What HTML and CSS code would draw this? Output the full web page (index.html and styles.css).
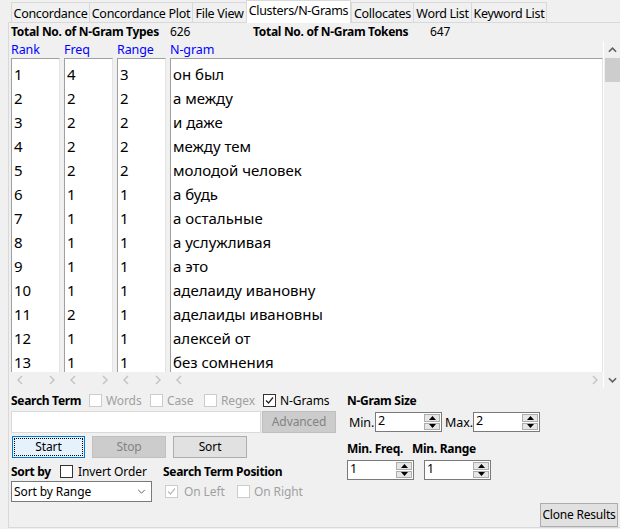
FILE: index.html
```html
<!DOCTYPE html>
<html>
<head>
<meta charset="utf-8">
<link rel="stylesheet" href="styles.css">
</head>
<body>
<div class="tabs">
  <div class="tab w1">Concordance</div>
  <div class="tab w2">Concordance Plot</div>
  <div class="tab w3">File View</div>
  <div class="tab active w4">Clusters/N-Grams</div>
  <div class="tab w5">Collocates</div>
  <div class="tab w6">Word List</div>
  <div class="tab w7">Keyword List</div>
</div>
<div class="panel">
  <div class="stats">
    <span class="b lbl-types">Total No. of N-Gram Types</span><span class="val1">626</span>
    <span class="b lbl-tokens">Total No. of N-Gram Tokens</span><span class="val2">647</span>
  </div>
  <div class="table">
    <div class="col c-small">
      <div class="head">Rank</div>
      <div class="box">
        <div class="row">1</div><div class="row">2</div><div class="row">3</div><div class="row">4</div><div class="row">5</div><div class="row">6</div><div class="row">7</div><div class="row">8</div><div class="row">9</div><div class="row">10</div><div class="row">11</div><div class="row">12</div><div class="row">13</div>
      </div>
      <div class="hscroll"><svg class="chev" viewBox="0 0 6 10"><path d="M5 1 L1 5 L5 9"/></svg><svg class="chev" viewBox="0 0 6 10"><path d="M1 1 L5 5 L1 9"/></svg></div>
    </div>
    <div class="col c-small">
      <div class="head">Freq</div>
      <div class="box">
        <div class="row">4</div><div class="row">2</div><div class="row">2</div><div class="row">2</div><div class="row">2</div><div class="row">1</div><div class="row">1</div><div class="row">1</div><div class="row">1</div><div class="row">1</div><div class="row">2</div><div class="row">1</div><div class="row">1</div>
      </div>
      <div class="hscroll"><svg class="chev" viewBox="0 0 6 10"><path d="M5 1 L1 5 L5 9"/></svg><svg class="chev" viewBox="0 0 6 10"><path d="M1 1 L5 5 L1 9"/></svg></div>
    </div>
    <div class="col c-small">
      <div class="head">Range</div>
      <div class="box">
        <div class="row">3</div><div class="row">2</div><div class="row">2</div><div class="row">2</div><div class="row">2</div><div class="row">1</div><div class="row">1</div><div class="row">1</div><div class="row">1</div><div class="row">1</div><div class="row">1</div><div class="row">1</div><div class="row">1</div>
      </div>
      <div class="hscroll"><svg class="chev" viewBox="0 0 6 10"><path d="M5 1 L1 5 L5 9"/></svg><svg class="chev" viewBox="0 0 6 10"><path d="M1 1 L5 5 L1 9"/></svg></div>
    </div>
    <div class="col c-wide">
      <div class="head">N-gram</div>
      <div class="box">
        <div class="row">он был</div><div class="row">а между</div><div class="row">и даже</div><div class="row">между тем</div><div class="row">молодой человек</div><div class="row">а будь</div><div class="row">а остальные</div><div class="row">а услужливая</div><div class="row">а это</div><div class="row">аделаиду ивановну</div><div class="row">аделаиды ивановны</div><div class="row">алексей от</div><div class="row">без сомнения</div>
      </div>
      <div class="hscroll"><svg class="chev" viewBox="0 0 6 10"><path d="M5 1 L1 5 L5 9"/></svg><svg class="chev" viewBox="0 0 6 10"><path d="M1 1 L5 5 L1 9"/></svg></div>
    </div>
    <div class="vscroll">
      <div class="varrow"><svg class="vchev" viewBox="0 0 10 6"><path d="M1 5 L5 1 L9 5"/></svg></div>
      <div class="thumb"></div>
      <div class="spacer"></div>
      <div class="varrow"><svg class="vchev" viewBox="0 0 10 6"><path d="M1 1 L5 5 L9 1"/></svg></div>
    </div>
  </div>
  <div class="bottom">
    <div class="left">
      <div class="r1">
        <span class="b st">Search Term</span>
        <span class="cb dis"></span><span class="cbl dis-t l-words">Words</span>
        <span class="cb dis"></span><span class="cbl dis-t l-case">Case</span>
        <span class="cb dis"></span><span class="cbl dis-t l-regex">Regex</span>
        <span class="cb"><svg viewBox="0 0 11 11"><path d="M2 5.5 L4.5 8 L9 2.5"/></svg></span><span class="cbl">N-Grams</span>
      </div>
      <div class="r2">
        <div class="input"></div>
        <div class="btn disabled adv">Advanced</div>
      </div>
      <div class="r3">
        <div class="btn start"><span class="focus">Start</span></div>
        <div class="btn disabled stop">Stop</div>
        <div class="btn sort">Sort</div>
      </div>
      <div class="r4">
        <span class="b sortby">Sort by</span>
        <span class="cb"></span><span class="cbl l-inv">Invert Order</span>
        <span class="b">Search Term Position</span>
      </div>
      <div class="r5">
        <div class="select"><span>Sort by Range</span><svg class="selchev" viewBox="0 0 10 6"><path d="M1 1 L5 5 L9 1"/></svg></div>
        <span class="cb dis m-left"><svg viewBox="0 0 11 11"><path d="M2 5.5 L4.5 8 L9 2.5"/></svg></span><span class="cbl dis-t l-left">On Left</span>
        <span class="cb dis"></span><span class="cbl dis-t">On Right</span>
      </div>
    </div>
    <div class="right">
      <div class="q1"><span class="b">N-Gram Size</span></div>
      <div class="q2">
        <span class="minl">Min.</span>
        <div class="spin"><span class="sv">2</span><div class="sb"><div class="sbtn"><svg viewBox="0 0 7 4"><path class="fill" d="M0 4 L3.5 0 L7 4Z"/></svg></div><div class="sbtn"><svg viewBox="0 0 7 4"><path class="fill" d="M0 0 L3.5 4 L7 0Z"/></svg></div></div></div>
        <span class="maxl">Max.</span>
        <div class="spin"><span class="sv">2</span><div class="sb"><div class="sbtn"><svg viewBox="0 0 7 4"><path class="fill" d="M0 4 L3.5 0 L7 4Z"/></svg></div><div class="sbtn"><svg viewBox="0 0 7 4"><path class="fill" d="M0 0 L3.5 4 L7 0Z"/></svg></div></div></div>
      </div>
      <div class="q3"><span class="b mfreq">Min. Freq.</span><span class="b">Min. Range</span></div>
      <div class="q4">
        <div class="spin"><span class="sv">1</span><div class="sb"><div class="sbtn"><svg viewBox="0 0 7 4"><path class="fill" d="M0 4 L3.5 0 L7 4Z"/></svg></div><div class="sbtn"><svg viewBox="0 0 7 4"><path class="fill" d="M0 0 L3.5 4 L7 0Z"/></svg></div></div></div>
        <div class="spin s2"><span class="sv">1</span><div class="sb"><div class="sbtn"><svg viewBox="0 0 7 4"><path class="fill" d="M0 4 L3.5 0 L7 4Z"/></svg></div><div class="sbtn"><svg viewBox="0 0 7 4"><path class="fill" d="M0 0 L3.5 4 L7 0Z"/></svg></div></div></div>
      </div>
      <div class="q5"><div class="btn clone">Clone Results</div></div>
    </div>
  </div>
</div>
</body>
</html>
```
FILE: styles.css
```css
* { box-sizing: border-box; }
html, body { margin: 0; padding: 0; }
body {
  width: 620px;
  height: 529px;
  overflow: hidden;
  background: #f0f0f0;
  font-family: "Noto Sans", "Open Sans", sans-serif;
  font-size: 12px;
  color: #000;
  letter-spacing: -0.1px;
}
.b { font-weight: bold; letter-spacing: -0.3px; }

/* tabs */
.tabs {
  display: flex;
  height: 22px;
  padding-left: 11px;
  align-items: flex-end;
}
.tab {
  height: 20px;
  padding-top: 3px;
  line-height: 16px;
  text-align: center;
  border: 1px solid #d9d9d9;
  border-bottom: none;
  border-right: none;
  background: #f0f0f0;
  white-space: nowrap;
  font-size: 12.5px;
  letter-spacing: -0.3px;
}
.tab.active {
  height: 23px;
  margin-bottom: -1px;
  padding-top: 2px;
  background: #fff;
  border-right: 1px solid #d9d9d9;
  position: relative;
  z-index: 2;
}
.tab.w7 { border-right: 1px solid #d9d9d9; }
.w1 { width: 78px; }
.w2 { width: 103px; }
.w3 { width: 54px; }
.w4 { width: 105px; }
.w5 { width: 62px; }
.w6 { width: 58px; }
.w7 { width: 76px; }

.panel {
  margin-left: 8px;
  height: 506px;
  border-left: 1px solid #d9d9d9;
  border-top: 1px solid #d9d9d9;
  border-bottom: 1px solid #d9d9d9;
  padding-left: 2px;
  display: flex;
  flex-direction: column;
}

.stats {
  height: 18px;
  line-height: 18px;
  display: flex;
  white-space: nowrap;
}
.lbl-types { width: 159px; }
.val1 { width: 83px; }
.lbl-tokens { width: 177px; }

/* table */
.table {
  display: flex;
  height: 347px;
}
.col { display: flex; flex-direction: column; margin-right: 4px; }
.c-small { width: 49px; }
.c-wide { width: 433px; margin-right: 0; }
.head {
  height: 17px;
  line-height: 17px;
  color: #0000ff;
  font-size: 12.5px;
  white-space: nowrap;
}
.box {
  height: 314px;
  background: #fff;
  border-top: 1px solid #a0a0a0;
  border-left: 1px solid #a0a0a0;
  border-right: 1px solid #e3e3e3;
  padding: 3px 0 0 2px;
  overflow: hidden;
  font-size: 15px;
  letter-spacing: 0;
}
.row {
  height: 24px;
  line-height: 24px;
  white-space: nowrap;
}
.hscroll {
  height: 16px;
  display: flex;
  justify-content: space-between;
  align-items: center;
  padding: 0 5px 0 6px;
}
.chev { width: 6px; height: 10px; }
.chev path, .selchev path {
  fill: none;
  stroke: #c2c2c2;
  stroke-width: 1.4;
}
.vscroll {
  flex: none;
  width: 17px;
  height: 347px;
  border-left: 1px solid #fff;
  display: flex;
  flex-direction: column;
  align-items: center;
}
.varrow {
  flex: none;
  height: 17px;
  width: 16px;
  display: flex;
  align-items: center;
  justify-content: center;
}
.vchev { width: 9px; height: 6px; display: block; }
.vchev path { fill: none; stroke: #606060; stroke-width: 1.8; }
.thumb {
  flex: none;
  width: 15px;
  height: 24px;
  background: #cdcdcd;
}
.spacer { flex: 1; }

/* bottom */
.bottom {
  display: flex;
  flex: 1;
}
.left { width: 336px; display: flex; flex-direction: column; }
.right {
  flex: 1;
  display: flex;
  flex-direction: column;
}
.r1 {
  margin-top: 2px;
  height: 20px;
  display: flex;
  align-items: center;
  white-space: nowrap;
}
.st { width: 78px; }
.cb {
  width: 13px;
  height: 13px;
  border: 1px solid #333;
  background: #fff;
  display: inline-flex;
  align-items: center;
  justify-content: center;
  flex: none;
}
.cb svg { width: 11px; height: 11px; }
.cb svg path { fill: none; stroke: #222; stroke-width: 1.2; }
.cb.dis { border-color: #cccccc; }
.cb.dis svg path { stroke: #bcbcbc; }
.cbl { margin-left: 4px; }
.dis-t { color: #a0a0a0; }
.l-words { width: 44px; }
.l-case { width: 37px; }
.l-regex { width: 42px; }

.r2 { margin-top: 1px; height: 22px; display: flex; }
.input {
  width: 250px;
  height: 22px;
  background: #fff;
  border: 1px solid #d9d9d9;
}
.btn {
  height: 22px;
  line-height: 20px;
  text-align: center;
  border: 1px solid #adadad;
  background: #e1e1e1;
  white-space: nowrap;
}
.btn.disabled {
  background: #cccccc;
  border-color: #bfbfbf;
  color: #838383;
}
.adv { width: 74px; margin-left: 1px; }

.r3 { margin-top: 3px; height: 22px; display: flex; }
.start {
  width: 73px;
  margin-left: 1px;
  background: #e5f1fb;
  border: 1px solid #0078d7;
  padding: 1px;
}
.focus {
  display: block;
  height: 18px;
  line-height: 16px;
  border: 1px dotted #000;
}
.stop { width: 74px; margin-left: 7px; }
.sort { width: 74px; margin-left: 7px; }

.r4 {
  margin-top: 5px;
  height: 16px;
  display: flex;
  align-items: center;
  white-space: nowrap;
}
.sortby { width: 49px; }
.l-inv { margin-left: 5px; width: 85px; }

.r5 { margin-top: 2px; height: 21px; display: flex; align-items: center; white-space: nowrap; }
.select {
  width: 141px;
  height: 21px;
  background: #fff;
  border: 1px solid #7a7a7a;
  display: flex;
  align-items: center;
  justify-content: space-between;
  padding: 0 5px 0 2px;
}
.selchev { width: 9px; height: 5px; }
.selchev path { stroke: #555; stroke-width: 1.1; }
.m-left { margin-left: 13px; }
.l-left { margin-left: 6px; width: 53px; }

.q1 { margin-top: 2px; height: 20px; display: flex; align-items: center; white-space: nowrap; }
.q2 { margin-top: 2px; height: 20px; display: flex; align-items: center; padding-left: 2px; }
.minl { width: 26px; font-size: 12.5px; }
.maxl { width: 28px; margin-left: 3px; font-size: 12.5px; }
.spin {
  width: 67px;
  height: 20px;
  background: #fff;
  border: 1px solid #7a7a7a;
  display: flex;
  justify-content: space-between;
  padding: 1px 1px 1px 2px;
}
.sv { line-height: 14px; font-size: 12.5px; }
.sb { width: 16px; display: flex; flex-direction: column; gap: 1px; }
.sbtn {
  flex: 1;
  background: #e6e6e6;
  border: 1px solid #adadad;
  display: flex;
  align-items: center;
  justify-content: center;
}
.sbtn svg { width: 7px; height: 4px; }
.sbtn .fill { fill: #000; }
.q3 { margin-top: 7px; height: 18px; display: flex; align-items: center; white-space: nowrap; }
.mfreq { width: 65px; }
.q4 { margin-top: 3px; height: 20px; display: flex; }
.s2 { margin-left: 10px; }
.q5 { flex: 1; display: flex; justify-content: flex-end; align-items: flex-end; padding-right: 2px; }
.clone { width: 78px; height: 24px; line-height: 22px; letter-spacing: -0.2px; }
```
